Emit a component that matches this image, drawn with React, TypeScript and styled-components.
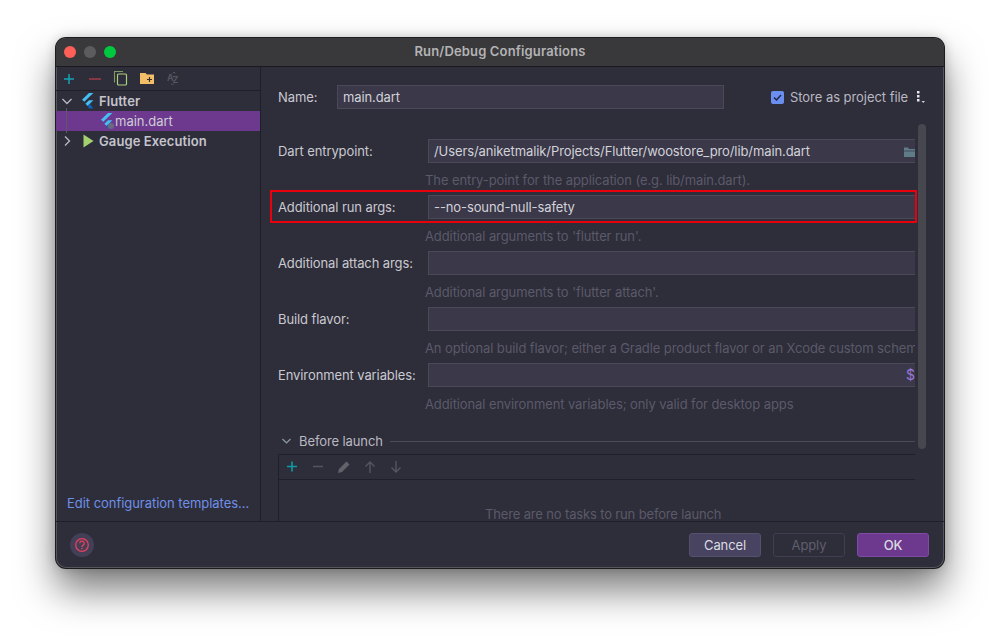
import React from "react";
import styled, { createGlobalStyle } from "styled-components";

const Global = createGlobalStyle`
  html, body { margin: 0; padding: 0; background: #fff; }
  body { width: 1000px; height: 642px; overflow: hidden; font-family: Inter, "Liberation Sans", sans-serif; }
`;

const Page = styled.div`
  padding: 38px 56px 74px;
  width: 1000px;
  height: 642px;
  box-sizing: border-box;
`;
const Window = styled.div`
  height: 530px;
  display: flex;
  flex-direction: column;
  background: #2e2d3a;
  border-radius: 10px;
  overflow: hidden;
  box-shadow: 0 0 0 1px #1c1c1e, inset 0 0 0 1px #55555c, 0 22px 38px rgba(0, 0, 0, 0.52), 0 0 12px rgba(0, 0, 0, 0.22);
  color: #c9c9d0;
  font-size: 13px;
  letter-spacing: -0.1px;
`;
const TitleBar = styled.div`
  height: 29px;
  flex: none;
  display: flex;
  align-items: center;
  position: relative;
  padding-left: 8px;
  gap: 8px;
  background: #39393b;
  border-bottom: 1px solid #19191f;
  box-sizing: border-box;
`;
const Light = styled.span<{ $c: string }>`
  width: 12px;
  height: 12px;
  border-radius: 50%;
  background: ${(p) => p.$c};
`;
const Title = styled.div`
  position: absolute;
  inset: 0 0 2px;
  display: flex;
  align-items: center;
  justify-content: center;
  font-size: 13px;
  font-weight: 600;
  color: #b3b3b5;
  letter-spacing: 0.15px;
`;
const Body = styled.div`
  flex: 1;
  display: flex;
  min-height: 0;
`;
const Sidebar = styled.div`
  width: 205px;
  flex: none;
  display: flex;
  flex-direction: column;
  border-right: 1px solid #1f1e29;
  box-sizing: border-box;
  position: relative;
`;
const SideTools = styled.div`
  height: 24px;
  flex: none;
  display: flex;
  align-items: center;
  padding-left: 6px;
  gap: 10px;
  border-bottom: 1px solid #1f1e29;
  box-sizing: border-box;
`;
const Tool = styled.span`
  width: 16px;
  height: 16px;
  display: block;
  svg { display: block; overflow: visible; }
`;
const AzText = styled.text`
  font: 700 9px Inter, "Liberation Sans", sans-serif;
  fill: #55555f;
`;
const Tree = styled.div`
  flex: 1;
  position: relative;
`;
const Guide = styled.div`
  position: absolute;
  left: 10px;
  top: 17px;
  width: 1px;
  height: 25px;
  background: #5b5a66;
`;
const TreeRow = styled.div<{ $sel?: boolean; $indent: number }>`
  height: 20px;
  display: flex;
  align-items: center;
  padding-left: ${(p) => p.$indent}px;
  background: ${(p) => (p.$sel ? "#6c398e" : "transparent")};
  color: ${(p) => (p.$sel ? "#cfcdd6" : "#c4c4cc")};
  font-size: 13px;
`;
const TreeBold = styled.span`
  font-weight: 600;
  letter-spacing: 0.1px;
  margin-left: 4px;
`;
const TreeName = styled.span`
  margin-left: 1px;
  letter-spacing: 0;
`;
const TreeIconSlot = styled.span<{ $gap: number }>`
  margin-left: ${(p) => p.$gap}px;
  display: block;
  svg { display: block; }
`;
const Link = styled.div`
  height: 36px;
  flex: none;
  display: flex;
  align-items: center;
  padding-left: 11px;
  color: #6e90e8;
  font-size: 13px;
  letter-spacing: -0.04px;
`;
const Pane = styled.div`
  flex: 1;
  min-width: 0;
  position: relative;
  padding: 18px 29px 0 17px;
  overflow: hidden;
  box-sizing: border-box;
`;
const Scroll = styled.div`
  position: absolute;
  left: 657px;
  top: 57px;
  width: 8px;
  height: 325px;
  border-radius: 4px;
  background: #47474f;
`;
const NameRow = styled.div`
  height: 24px;
  display: flex;
  align-items: center;
  margin-bottom: 30px;
`;
const NameLabel = styled.label`
  width: 59px;
  flex: none;
`;
const Input = styled.div<{ $w?: string }>`
  height: 24px;
  width: ${(p) => p.$w ?? "auto"};
  flex: ${(p) => (p.$w ? "none" : "1")};
  min-width: 0;
  background: #3a3849;
  border: 1px solid #4a4959;
  box-sizing: border-box;
  display: flex;
  align-items: center;
  padding: 0 5px;
  color: #d2d2d8;
  position: relative;
  white-space: nowrap;
`;
const OpenInput = styled(Input)`
  border-right: none;
`;
const Check = styled.span`
  width: 13px;
  height: 13px;
  border-radius: 2px;
  background: #6b8ff0;
  margin-left: 47px;
  display: block;
  flex: none;
  svg { display: block; }
`;
const CheckLabel = styled.span`
  margin-left: 6px;
  color: #b9b9c1;
  white-space: nowrap;
  letter-spacing: -0.05px;
`;
const Dots = styled.span`
  margin-left: 9px;
  width: 8px;
  height: 14px;
  flex: none;
  svg { display: block; }
`;
const FieldRow = styled.div`
  height: 24px;
  display: flex;
  align-items: center;
  position: relative;
`;
const FieldLabel = styled.label`
  width: 150px;
  flex: none;
  white-space: nowrap;
`;
const Hint = styled.div`
  height: 32px;
  box-sizing: border-box;
  padding: 9px 0 0 147px;
  line-height: 16px;
  color: #5b5a69;
  white-space: nowrap;
  overflow: hidden;
`;
const RedBox = styled.div`
  position: absolute;
  left: -8px;
  right: -2px;
  top: -5px;
  bottom: -4px;
  border: 2px solid #e8000d;
  pointer-events: none;
`;
const EndIcon = styled.span`
  position: absolute;
  right: 0;
  top: 5px;
  width: 11px;
  height: 14px;
  overflow: hidden;
  svg { display: block; }
`;
const DollarSign = styled.span`
  position: absolute;
  right: 0;
  top: 2px;
  color: #9a78dc;
  font-size: 14px;
  line-height: 18px;
`;
const Section = styled.div`
  height: 18px;
  margin-top: 13px;
  display: flex;
  align-items: center;
  color: #b9b9c1;
`;
const SectionChevron = styled.span`
  width: 21px;
  flex: none;
  svg { display: block; margin-left: 3px; }
`;
const SectionLine = styled.span`
  flex: 1;
  height: 1px;
  background: #4c4b58;
  margin-left: 7px;
`;
const TaskBox = styled.div`
  margin-top: 4px;
  border-left: 1px solid #1f1e29;
  border-top: 1px solid #1f1e29;
  height: 80px;
`;
const TaskTools = styled.div`
  height: 25px;
  display: flex;
  align-items: center;
  padding-left: 5px;
  gap: 10px;
  border-bottom: 1px solid #1f1e29;
  box-sizing: border-box;
`;
const Empty = styled.div`
  color: #5b5a69;
  padding: 26px 0 0 206px;
  line-height: 16px;
  white-space: nowrap;
  letter-spacing: -0.15px;
`;
const Footer = styled.div`
  height: 47px;
  flex: none;
  display: flex;
  align-items: center;
  padding: 0 15px 0 14px;
  border-top: 1px solid #1f1e29;
  box-sizing: border-box;
`;
const Help = styled.span`
  width: 24px;
  height: 24px;
  border-radius: 50%;
  background: #423f56;
  display: flex;
  align-items: center;
  justify-content: center;
  margin-right: auto;
`;
const Btn = styled.button<{ $kind: "normal" | "off" | "ok" }>`
  width: 72px;
  height: 24px;
  margin-left: 12px;
  border-radius: 3px;
  font: 13px Inter, "Liberation Sans", sans-serif;
  letter-spacing: -0.1px;
  font-weight: ${(p) => (p.$kind === "ok" ? 500 : 400)};
  padding: 0;
  border: 1px solid ${(p) => (p.$kind === "normal" ? "#55506c" : p.$kind === "off" ? "#403e52" : "#7d4ba3")};
  background: ${(p) => (p.$kind === "normal" ? "#474360" : p.$kind === "off" ? "#2e2d3a" : "#6c398e")};
  color: ${(p) => (p.$kind === "off" ? "#5f5e6d" : "#dcdce0")};
`;

const Ico = ({ children, w = 16, h = 16 }: { children: React.ReactNode; w?: number; h?: number }) => (
  <svg width={w} height={h} viewBox={`0 0 ${w} ${h}`} fill="none">{children}</svg>
);
const FlutterIcon = ({ small }: { small?: boolean }) => (
  <svg width="14" height="16" viewBox="0 0 14 16">
    <path d="M8 0h4.400L3.300 8.800 1 6.700z" fill="#45bdf5" />
    <path d="M12.400 7.200H8L4.400 10.800l2.200 2.200z" fill="#45bdf5" />
    <path d="M6.600 13l2.200-2.200 3.600 4.600H8z" fill="#0f62b8" />
    {small && <circle cx="11" cy="13" r="3" fill="#6b6b80" />}
  </svg>
);
const Chevron = ({ open }: { open?: boolean }) => (
  <Ico w={12} h={12}>
    <path d={open ? "M1.500 4l4.500 4.500L10.500 4" : "M4 1.500L8.500 6 4 10.500"} stroke="#b9b9c1" strokeWidth="1.300" />
  </Ico>
);

export default function App() {
  return (
    <Page>
      <Global />
      <Window>
        <TitleBar>
          <Light $c="#fe5f57" />
          <Light $c="#5c5c5e" />
          <Light $c="#00c93f" />
          <Title>Run/Debug Configurations</Title>
        </TitleBar>
        <Body>
          <Sidebar>
            <SideTools>
              <Tool><Ico><path d="M7 3v10M2 8h10" stroke="#16a2b4" strokeWidth="1.500" /></Ico></Tool>
              <Tool><Ico><path d="M1 8h12" stroke="#a33c48" strokeWidth="1.500" /></Ico></Tool>
              <Tool>
                <Ico>
                  <path d="M.5 11.500V.5H9" stroke="#7f9c64" strokeWidth="1.100" />
                  <rect x="3.500" y="3" width="9" height="11" rx="1" stroke="#a9cf7d" strokeWidth="1.200" />
                </Ico>
              </Tool>
              <Tool>
                <Ico>
                  <path d="M0 2h5.500L7 3.500h7v9.500H0z" fill="#f2bf68" />
                  <path d="M9.500 6v5M7 8.500h5" stroke="#3a3028" strokeWidth="1.200" />
                </Ico>
              </Tool>
              <Tool>
                <Ico>
                  <AzText x="1" y="10">A</AzText>
                  <AzText x="6.500" y="11.500">Z</AzText>
                  <path d="M6.500 2.500L8 1l1.500 1.500M5 12.500L6.500 14 8 12.500" stroke="#55555f" strokeWidth="1" />
                </Ico>
              </Tool>
            </SideTools>
            <Tree>
              <Guide />
              <TreeRow $indent={5}>
                <Chevron open />
                <TreeIconSlot $gap={8}><FlutterIcon /></TreeIconSlot>
                <TreeBold>Flutter</TreeBold>
              </TreeRow>
              <TreeRow $sel $indent={44}>
                <TreeIconSlot $gap={0}><FlutterIcon small /></TreeIconSlot>
                <TreeName>main.dart</TreeName>
              </TreeRow>
              <TreeRow $indent={5}>
                <Chevron />
                <TreeIconSlot $gap={9}>
                  <Ico w={13} h={14}><path d="M1.500 .5l10 6.500-10 6.500z" fill="#a4d16f" /></Ico>
                </TreeIconSlot>
                <TreeBold>Gauge Execution</TreeBold>
              </TreeRow>
            </Tree>
            <Link>Edit configuration templates...</Link>
          </Sidebar>
          <Pane>
            <NameRow>
              <NameLabel>Name:</NameLabel>
              <Input $w="387px">main.dart</Input>
              <Check>
                <svg width="13" height="13" viewBox="0 0 13 13" fill="none">
                  <path d="M3 6.500l2.500 2.500L10 4" stroke="#1f2747" strokeWidth="1.500" />
                </svg>
              </Check>
              <CheckLabel>Store as project file</CheckLabel>
              <Dots>
                <svg width="8" height="14" viewBox="0 0 8 14">
                  <rect x="0" y="1" width="2.500" height="2.500" fill="#e6e6ea" />
                  <rect x="0" y="5" width="2.500" height="2.500" fill="#e6e6ea" />
                  <rect x="0" y="9" width="2.500" height="2.500" fill="#e6e6ea" />
                  <path d="M4.500 11h3.500L6.250 13z" fill="#d0d0d4" />
                </svg>
              </Dots>
            </NameRow>

            <FieldRow>
              <FieldLabel>Dart entrypoint:</FieldLabel>
              <OpenInput>
                /Users/aniketmalik/Projects/Flutter/woostore_pro/lib/main.dart
                <EndIcon>
                  <svg width="11" height="14" viewBox="0 0 11 14">
                    <path d="M0 2.500h4l1 1.500h6v8H0z" fill="#5f7d86" />
                    <path d="M0 5.500h11v1H0z" fill="#3f4f5c" />
                  </svg>
                </EndIcon>
              </OpenInput>
            </FieldRow>
            <Hint>The entry-point for the application (e.g. lib/main.dart).</Hint>

            <FieldRow>
              <FieldLabel>Additional run args:</FieldLabel>
              <OpenInput>--no-sound-null-safety</OpenInput>
              <RedBox />
            </FieldRow>
            <Hint>Additional arguments to 'flutter run'.</Hint>

            <FieldRow>
              <FieldLabel>Additional attach args:</FieldLabel>
              <OpenInput />
            </FieldRow>
            <Hint>Additional arguments to 'flutter attach'.</Hint>

            <FieldRow>
              <FieldLabel>Build flavor:</FieldLabel>
              <OpenInput />
            </FieldRow>
            <Hint>An optional build flavor; either a Gradle product flavor or an Xcode custom scheme.</Hint>

            <FieldRow>
              <FieldLabel>Environment variables:</FieldLabel>
              <OpenInput>
                <DollarSign>$</DollarSign>
              </OpenInput>
            </FieldRow>
            <Hint>Additional environment variables; only valid for desktop apps</Hint>

            <Section>
              <SectionChevron>
                <Ico w={12} h={12}><path d="M1.500 4l4 4 4-4" stroke="#8f9aa6" strokeWidth="1.200" /></Ico>
              </SectionChevron>
              Before launch
              <SectionLine />
            </Section>
            <TaskBox>
              <TaskTools>
                <Tool><Ico><path d="M8 2.500v10M3 7.500h10" stroke="#0e9aa9" strokeWidth="1.600" /></Ico></Tool>
                <Tool><Ico><path d="M3 7.500h10" stroke="#55555f" strokeWidth="1.500" /></Ico></Tool>
                <Tool><Ico><path d="M2 14l1-4 7.500-7.500 3 3L6 13z" fill="#62626a" /></Ico></Tool>
                <Tool><Ico><path d="M8 14V3M3.500 7.500L8 3l4.500 4.500" stroke="#55555f" strokeWidth="1.400" /></Ico></Tool>
                <Tool><Ico><path d="M8 2v11M3.500 8.500L8 13l4.500-4.500" stroke="#55555f" strokeWidth="1.400" /></Ico></Tool>
              </TaskTools>
              <Empty>There are no tasks to run before launch</Empty>
            </TaskBox>
            <Scroll />
          </Pane>
        </Body>
        <Footer>
          <Help>
            <svg width="16" height="16" viewBox="0 0 16 16" fill="none">
              <circle cx="8" cy="8" r="6.300" stroke="#e8405f" strokeWidth="1.300" />
              <path d="M5.800 6.300a2.200 2.200 0 1 1 3.400 1.800c-.8.500-1.200.9-1.200 1.800" stroke="#e8405f" strokeWidth="1.300" />
              <rect x="7.300" y="10.800" width="1.400" height="1.400" fill="#e8405f" />
            </svg>
          </Help>
          <Btn $kind="normal">Cancel</Btn>
          <Btn $kind="off">Apply</Btn>
          <Btn $kind="ok">OK</Btn>
        </Footer>
      </Window>
    </Page>
  );
}
